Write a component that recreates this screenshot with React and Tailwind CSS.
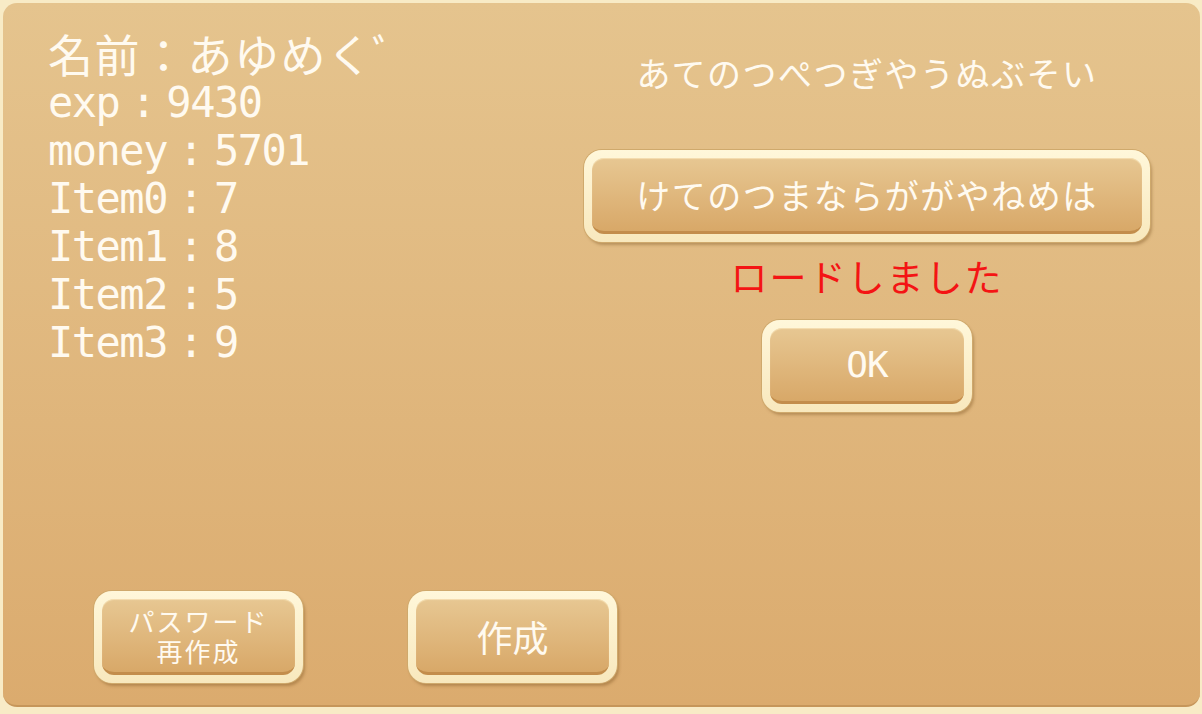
import React from 'react';

const jp = "font-['Noto_Sans_CJK_JP','Noto_Sans',sans-serif]";
const mono = "font-['DejaVu_Sans_Mono','Noto_Sans_CJK_JP',monospace]";

function GameButton({ className = '', children }) {
    return (
        <div
            className={`rounded-[18px] bg-gradient-to-b from-[#fff7da] to-[#f8e8bd] p-[8px] shadow-[0_0_0_1px_#cfa96c,2px_3px_3px_rgba(110,70,20,0.35)] ${className}`}
        >
            <div className="flex h-full w-full items-center justify-center rounded-[12px] border-b-[3px] border-[#c38d4c] bg-gradient-to-b from-[#e7c792] to-[#d8a868] shadow-[inset_0_1px_1px_rgba(255,240,200,0.6)]">
                {children}
            </div>
        </div>
    );
}

function StatLine({ label, value }) {
    return (
        <div className="flex h-[48px] items-center leading-[48px]">
            <span>{label}</span>
            <span className="w-[47px] text-center">:</span>
            <span>{value}</span>
        </div>
    );
}

export default function App() {
    const stats = [
        ['exp', 9430],
        ['money', 5701],
        ['Item0', 7],
        ['Item1', 8],
        ['Item2', 5],
        ['Item3', 9],
    ];

    return (
        <div className="h-[714px] w-[1202px] bg-[#f8ebc6] pb-[7px] pl-[3px] pr-[2px] pt-[3px]">
            <div className="flex h-full w-full flex-col rounded-[14px] border-b-2 border-[#c6965a] bg-gradient-to-b from-[#e5c48e] to-[#dbab6e]">
                <div className="flex justify-between">
                    <div className="pl-[45px] pt-[26px] text-[#fffaf0]">
                        <div className={`${jp} h-[50px] text-[45px] leading-[50px] tracking-[1.5px]`}>
                            名前：あゆめくﾞ
                        </div>
                        <div className={`${mono} text-[42px] tracking-[-1.5px]`}>
                            {stats.map(([label, value]) => (
                                <StatLine key={label} label={label} value={value} />
                            ))}
                        </div>
                    </div>

                    <div className="mr-[50px] flex w-[566px] flex-col items-center pt-[50px]">
                        <div className={`${jp} h-[40px] text-[34px] leading-[40px] tracking-[1.5px] text-[#fffaf0]`}>
                            あてのつぺつぎやうぬぶそい
                        </div>
                        <GameButton className="mt-[57px] h-[92px] w-full">
                            <span className={`${jp} text-[34px] tracking-[1.5px] text-[#fffaf0]`}>
                                けてのつまならががやねめは
                            </span>
                        </GameButton>
                        <div className={`${jp} mt-[14px] h-[40px] text-[37px] leading-[40px] tracking-[2px] text-[#f41414]`}>
                            ロードしました
                        </div>
                        <GameButton className="mt-[24px] h-[92px] w-[210px]">
                            <span className={`${mono} text-[36px] tracking-[-1px] text-[#fffaf0]`}>OK</span>
                        </GameButton>
                    </div>
                </div>

                <div className="mt-auto flex gap-[105px] pb-[22px] pl-[91px]">
                    <GameButton className="h-[92px] w-[209px]">
                        <div className={`${jp} flex flex-col items-center text-[26px] leading-[30px] tracking-[2px] text-[#fffaf0]`}>
                            <span>パスワード</span>
                            <span>再作成</span>
                        </div>
                    </GameButton>
                    <GameButton className="h-[92px] w-[209px]">
                        <span className={`${jp} text-[36px] text-[#fffaf0]`}>作成</span>
                    </GameButton>
                </div>
            </div>
        </div>
    );
}
